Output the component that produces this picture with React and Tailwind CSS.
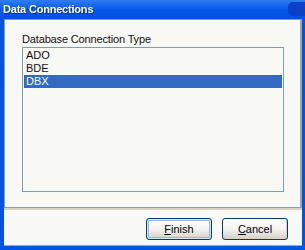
import React, { useState } from 'react';

const items = ['ADO', 'BDE', 'DBX'];

function XpButton({ label, mnemonic, isDefault }) {
  return (
    <button
      className={`w-[66px] h-[22px] rounded-[3px] border border-[#003c74] bg-gradient-to-b from-[#ffffff] via-[#f4f3ee] to-[#d6d0c5] text-[11px] text-black flex items-center justify-center ${
        isDefault ? 'shadow-[inset_0_0_0_1px_#cee7ff,inset_0_0_0_2px_#98b8ea]' : 'shadow-[inset_-1px_-1px_0_#d8d2c6]'
      }`}
    >
      <span>
        <span className="underline">{mnemonic}</span>
        {label.slice(1)}
      </span>
    </button>
  );
}

export default function App() {
  const [selected, setSelected] = useState(2);

  return (
    <div
      className="w-[305px] h-[250px] bg-[#0054e3] flex flex-col overflow-hidden"
      style={{ fontFamily: '"Liberation Sans", Arial, sans-serif' }}
    >
      {/* Title bar */}
      <div className="h-[19px] shrink-0 bg-gradient-to-b from-[#2f7cf2] via-[#0559ea] to-[#0051e0] flex items-center pl-[3px] relative">
        <span className="text-white font-bold text-[11px] leading-none tracking-[-0.2px] drop-shadow-[1px_1px_0_#0a2f8a]">
          Data Connections
        </span>
        <div className="absolute right-0 top-[2px] w-[17px] h-[14px] bg-[#0a3fc6] rounded-l-[5px]" />
      </div>

      {/* Client area */}
      <div className="flex-1 ml-[4px] mr-[3px] bg-[#f8f8f4] flex flex-col">
        <div className="h-[189px] shrink-0 border border-[#8b9db8] border-r-[#a7a6a0] border-r-2 pt-[13px] pl-[17px] pr-[16px] flex flex-col">
          <div className="text-[11px] leading-[13px] tracking-[-0.15px] text-[#111] mb-[1px]">Database Connection Type</div>
          <div className="h-[145px] border border-[#7f9db9] bg-[#f8f8f4] p-[1px] flex flex-col">
            {items.map((it, i) => (
              <div
                key={it}
                onClick={() => setSelected(i)}
                className={`h-[13px] pl-[2px] text-[11px] leading-[13px] ${
                  selected === i ? 'bg-[#316ac5] text-white' : 'text-[#111]'
                }`}
              >
                {it}
              </div>
            ))}
          </div>
        </div>
        <div className="h-[2px] shrink-0 bg-[#d9d3c2]" />
        <div className="flex-1 flex justify-end items-start gap-[10px] pt-[8px] pr-[14px] border-b border-[#a6a6a0]">
          <XpButton label="Finish" mnemonic="F" isDefault />
          <XpButton label="Cancel" mnemonic="C" />
        </div>
      </div>
      <div className="h-[4px] shrink-0" />
    </div>
  );
}
